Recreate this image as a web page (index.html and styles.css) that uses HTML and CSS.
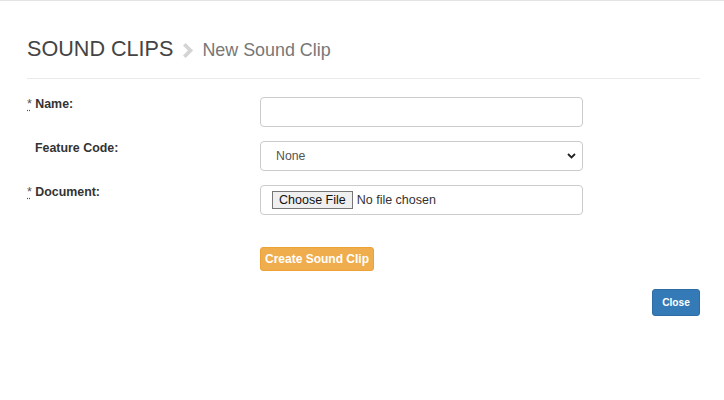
FILE: index.html
```html
<!DOCTYPE html>
<html lang="en">
<head>
<meta charset="utf-8">
<title>Sound Clips - New Sound Clip</title>
<link rel="stylesheet" href="styles.css">
</head>
<body>
<div class="modal">
  <div class="header">
    <h1 class="title">
      <span class="title-main">SOUND CLIPS</span>
      <svg class="crumb" width="11" height="15" viewBox="0 0 11 15" aria-hidden="true"><path d="M0 2.6 L2.6 0 L10.1 7.5 L2.6 15 L0 12.4 L4.9 7.5 Z" fill="#d4d4d4"/></svg>
      <small class="title-sub">New Sound Clip</small>
    </h1>
  </div>
  <form class="form">
    <div class="row">
      <label class="label" for="name"><abbr title="required">*</abbr> Name:</label>
      <input class="control" id="name" type="text">
    </div>
    <div class="row">
      <label class="label label-plain" for="feature">Feature Code:</label>
      <div class="select-wrap">
        <select class="control select" id="feature">
          <option>None</option>
        </select>
        <svg class="select-arrow" width="9" height="6" viewBox="0 0 9 6" aria-hidden="true"><path d="M1 1 L4.5 4.5 L8 1" fill="none" stroke="#222" stroke-width="1.8"/></svg>
      </div>
    </div>
    <div class="row">
      <label class="label" for="doc"><abbr title="required">*</abbr> Document:</label>
      <div class="control file-box"><input class="file" id="doc" type="file"></div>
    </div>
    <div class="actions">
      <button type="button" class="btn btn-create">Create Sound Clip</button>
    </div>
  </form>
  <div class="footer">
    <button type="button" class="btn btn-close">Close</button>
  </div>
</div>
</body>
</html>
```
FILE: styles.css
```css
html, body {
  margin: 0;
  padding: 0;
  background: #fff;
}
body {
  font-family: "Liberation Sans", Arial, sans-serif;
  color: #333;
}
.modal {
  border-top: 1px solid #e3e3e3;
  padding: 0 24px 0 27px;
}
.header {
  padding-top: 35px;
  padding-bottom: 15px;
  border-bottom: 1px solid #eaeaea;
}
.title {
  margin: 0;
  font-weight: normal;
  font-size: 21.6px;
  line-height: 25px;
  color: #444;
  display: flex;
  align-items: baseline;
}
.crumb {
  margin: 0 8px 0 10px;
  align-self: center;
  position: relative;
  top: 1px;
}
.title-sub {
  font-size: 17.9px;
  color: #777;
}
.form {
  margin-top: 18px;
  display: flex;
  flex-direction: column;
  gap: 14px;
}
.row {
  display: grid;
  grid-template-columns: 233px 323px;
  align-items: start;
}
.label {
  font-size: 12.4px;
  font-weight: bold;
  line-height: 14px;
  color: #333;
}
.label-plain {
  padding-left: 8px;
}
abbr {
  text-decoration: underline dotted;
  text-underline-offset: 2px;
  font-weight: normal;
  color: #555;
}
.control {
  box-sizing: border-box;
  width: 323px;
  height: 30px;
  margin: 0;
  border: 1px solid #cbcbcb;
  border-radius: 4px;
  background: #fff;
  font-family: "Liberation Sans", Arial, sans-serif;
  font-size: 12.3px;
  color: #555;
  padding: 0 11px;
}
.select-wrap {
  position: relative;
  width: 323px;
  height: 30px;
}
.select {
  appearance: none;
  -webkit-appearance: none;
  padding-left: 15px;
}
.select-arrow {
  position: absolute;
  right: 7px;
  top: 12px;
  pointer-events: none;
}
.file-box {
  display: flex;
  align-items: center;
  padding: 0 11px;
}
.file {
  font-family: "Liberation Sans", Arial, sans-serif;
  font-size: 12.5px;
  color: #333;
}
.file::file-selector-button {
  font-family: "Liberation Sans", Arial, sans-serif;
  font-size: 12.5px;
  color: #111;
  height: 18px;
  padding: 0 6px;
  margin-right: 4px;
  background: #efefef;
  border: 1px solid #767676;
  border-radius: 0;
}
.actions {
  margin-top: 18px;
  padding-left: 233px;
}
.btn {
  font-family: "Liberation Sans", Arial, sans-serif;
  font-weight: bold;
  color: #fff;
  border-radius: 3px;
  cursor: pointer;
  box-sizing: border-box;
}
.btn-create {
  height: 24px;
  width: 114px;
  padding: 0;
  font-size: 12px;
  background: #f0ad4e;
  border: 1px solid #eea236;
}
.footer {
  margin-top: 18px;
  display: flex;
  justify-content: flex-end;
}
.btn-close {
  height: 27px;
  width: 48px;
  padding: 0;
  font-size: 10.2px;
  background: #337ab7;
  border: 1px solid #2e6da4;
}
```
